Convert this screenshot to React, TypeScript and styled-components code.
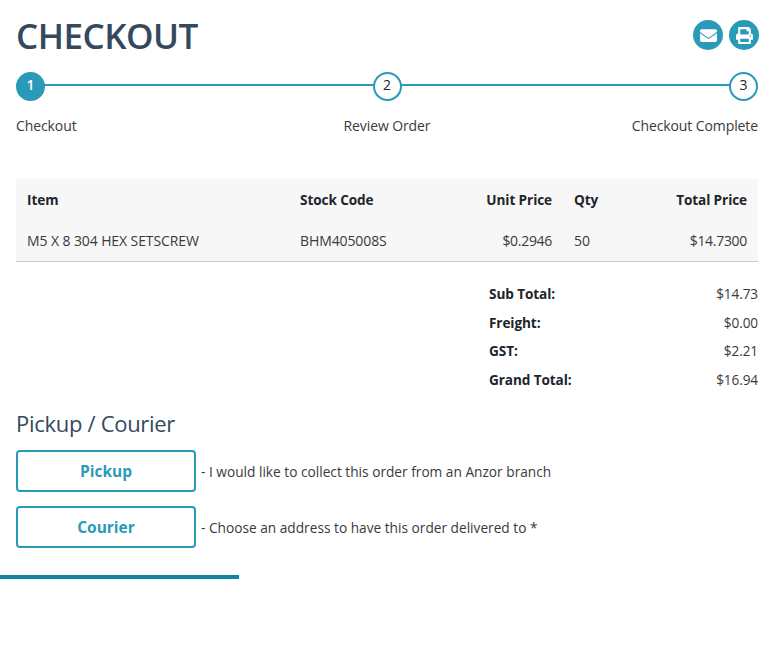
import React, { FunctionComponent } from "react";
import styled, { createGlobalStyle } from "styled-components";
import { FaEnvelope, FaPrint } from "react-icons/fa";

const TEAL = "#2a9ab9";
const INK = "#212529";
const HEADING = "#34495e";

const GlobalStyle = createGlobalStyle`
  html, body {
    margin: 0;
    padding: 0;
    background: #fff;
    font-family: "Open Sans", "Noto Sans", sans-serif;
    color: ${INK};
  }
`;

const Page = styled.div`
  width: 776px;
  height: 654px;
  box-sizing: border-box;
  overflow: hidden;
  display: flex;
  flex-direction: column;
`;

const Content = styled.div`
  padding: 0 18px 0 16px;
  display: flex;
  flex-direction: column;
`;

const Header = styled.header`
  height: 72px;
  display: flex;
  justify-content: space-between;
  align-items: flex-start;
`;

const Title = styled.h1`
  margin: 12px 0 0;
  font-size: 35px;
  line-height: 48px;
  font-weight: 600;
  letter-spacing: -0.5px;
  color: ${HEADING};
`;

const IconRow = styled.div`
  display: flex;
  gap: 6px;
  margin: 20px -1px 0 0;
`;

const IconButton = styled.span`
  width: 30px;
  height: 30px;
  border-radius: 50%;
  background: ${TEAL};
  color: #fff;
  display: flex;
  align-items: center;
  justify-content: center;
  font-size: 17px;
`;

const Stepper = styled.div`
  display: flex;
  justify-content: space-between;
  position: relative;
  height: 29px;
`;

const StepLine = styled.div`
  position: absolute;
  left: 14px;
  right: 14px;
  top: 12px;
  height: 2px;
  background: ${TEAL};
`;

const StepCircle = styled.span<{ $active?: boolean }>`
  position: relative;
  width: 29px;
  height: 29px;
  box-sizing: border-box;
  border-radius: 50%;
  border: 2px solid ${TEAL};
  background: ${(p) => (p.$active ? TEAL : "#fff")};
  color: ${(p) => (p.$active ? "#fff" : INK)};
  font-size: 14px;
  font-weight: ${(p) => (p.$active ? 600 : 400)};
  display: flex;
  align-items: center;
  justify-content: center;
  padding-bottom: 4px;
`;

const StepLabels = styled.div`
  display: grid;
  grid-template-columns: 1fr auto 1fr;
  margin-top: 15px;
  font-size: 14px;
  line-height: 20px;
  letter-spacing: -0.1px;
  color: #3a3a3a;
`;

const EndLabel = styled.span`
  text-align: right;
`;

const Table = styled.table`
  margin-top: 43px;
  width: 742px;
  border-collapse: collapse;
  table-layout: fixed;
  background: #f7f7f7;
  border-bottom: 1px solid #c9c9c9;
  font-size: 14px;
  letter-spacing: -0.1px;
`;

const HeadCell = styled.th<{ $right?: boolean; $w: number }>`
  width: ${(p) => p.$w}px;
  box-sizing: border-box;
  height: 42px;
  padding: 0 11px 2px;
  font-weight: 700;
  font-size: 13.6px;
  text-align: ${(p) => (p.$right ? "right" : "left")};
`;

const BodyCell = styled.td<{ $right?: boolean }>`
  box-sizing: border-box;
  height: 40px;
  padding: 0 11px;
  color: #3a3a3a;
  text-align: ${(p) => (p.$right ? "right" : "left")};
  letter-spacing: ${(p) => (p.$right ? "-0.3px" : "-0.1px")};
`;

const Totals = styled.div`
  margin: 18px 0 0 473px;
  display: flex;
  flex-direction: column;
  font-size: 13.6px;
  letter-spacing: -0.1px;
`;

const TotalRow = styled.div`
  height: 28.5px;
  display: flex;
  align-items: center;
  justify-content: space-between;
`;

const TotalLabel = styled.strong`
  font-weight: 700;
`;

const TotalValue = styled.span`
  color: #3a3a3a;
`;

const SectionTitle = styled.h2`
  margin: 14px 0 12px;
  font-size: 22px;
  line-height: 30px;
  font-weight: 500;
  letter-spacing: -0.3px;
  color: ${HEADING};
`;

const OptionList = styled.div`
  display: flex;
  flex-direction: column;
  gap: 14px;
`;

const OptionRow = styled.div`
  display: flex;
  align-items: center;
  gap: 5px;
  font-size: 13.7px;
  color: #3a3a3a;
`;

const OptionNote = styled.span`
  padding-top: 2px;
`;

const OptionButton = styled.button`
  width: 180px;
  height: 42px;
  box-sizing: border-box;
  background: #fff;
  border: 2px solid ${TEAL};
  border-radius: 4px;
  color: ${TEAL};
  font-family: inherit;
  font-size: 15.5px;
  font-weight: 700;
  padding: 0;
`;

const ProgressBar = styled.div`
  margin-top: 27px;
  width: 239px;
  height: 4px;
  background: #0f84a5;
`;

const rows = [
  { label: "Sub Total:", value: "$14.73" },
  { label: "Freight:", value: "$0.00" },
  { label: "GST:", value: "$2.21" },
  { label: "Grand Total:", value: "$16.94" },
];

const App: FunctionComponent = () => {
  return (
    <Page>
      <GlobalStyle />
      <Content>
        <Header>
          <Title>CHECKOUT</Title>
          <IconRow>
            <IconButton>
              <FaEnvelope />
            </IconButton>
            <IconButton>
              <FaPrint />
            </IconButton>
          </IconRow>
        </Header>
        <Stepper>
          <StepLine />
          <StepCircle $active>1</StepCircle>
          <StepCircle>2</StepCircle>
          <StepCircle>3</StepCircle>
        </Stepper>
        <StepLabels>
          <span>Checkout</span>
          <span>Review Order</span>
          <EndLabel>Checkout Complete</EndLabel>
        </StepLabels>
        <Table>
          <thead>
            <tr>
              <HeadCell $w={273}>Item</HeadCell>
              <HeadCell $w={150}>Stock Code</HeadCell>
              <HeadCell $w={124} $right>
                Unit Price
              </HeadCell>
              <HeadCell $w={75}>Qty</HeadCell>
              <HeadCell $w={120} $right>
                Total Price
              </HeadCell>
            </tr>
          </thead>
          <tbody>
            <tr>
              <BodyCell>M5 X 8 304 HEX SETSCREW</BodyCell>
              <BodyCell>BHM405008S</BodyCell>
              <BodyCell $right>$0.2946</BodyCell>
              <BodyCell>50</BodyCell>
              <BodyCell $right>$14.7300</BodyCell>
            </tr>
          </tbody>
        </Table>
        <Totals>
          {rows.map((row) => (
            <TotalRow key={row.label}>
              <TotalLabel>{row.label}</TotalLabel>
              <TotalValue>{row.value}</TotalValue>
            </TotalRow>
          ))}
        </Totals>
        <SectionTitle>Pickup / Courier</SectionTitle>
        <OptionList>
          <OptionRow>
            <OptionButton>Pickup</OptionButton>
            <OptionNote>- I would like to collect this order from an Anzor branch</OptionNote>
          </OptionRow>
          <OptionRow>
            <OptionButton>Courier</OptionButton>
            <OptionNote>- Choose an address to have this order delivered to *</OptionNote>
          </OptionRow>
        </OptionList>
      </Content>
      <ProgressBar />
    </Page>
  );
};

export default App;
